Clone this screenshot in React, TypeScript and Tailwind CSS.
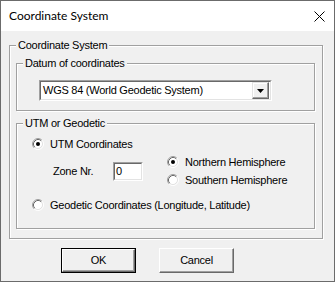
import type { ReactNode } from 'react';

const Radio = ({ checked }: { checked?: boolean }) => (
  <svg width="12" height="12" viewBox="0 0 12 12" className="shrink-0">
    <circle cx="6" cy="6" r="4.5" fill="#fff" />
    <path d="M2.11 9.89 A5.5 5.5 0 0 1 9.89 2.11" fill="none" stroke="#a0a0a0" />
    <path d="M2.11 9.89 A5.5 5.5 0 0 0 9.89 2.11" fill="none" stroke="#fff" />
    <path d="M2.82 9.18 A4.5 4.5 0 0 1 9.18 2.82" fill="none" stroke="#696969" />
    <path d="M2.82 9.18 A4.5 4.5 0 0 0 9.18 2.82" fill="none" stroke="#e3e3e3" />
    {checked && <circle cx="6" cy="6" r="2" fill="#000" />}
  </svg>
);

const Group = ({ label, className, children }: { label: string; className: string; children?: ReactNode }) => (
  <div className={`relative border border-[#a0a0a0] shadow-[inset_1px_1px_0_#fff,1px_1px_0_#fff] ${className}`}>
    <span className="absolute -top-[8px] left-[6px] bg-[#f0f0f0] px-[2px] leading-[14px]">{label}</span>
    {children}
  </div>
);

const Sunken = ({ className, children }: { className: string; children?: ReactNode }) => (
  <div className={`border border-t-[#a0a0a0] border-l-[#a0a0a0] border-r-white border-b-white ${className}`}>
    <div className="flex h-full items-center border border-t-[#696969] border-l-[#696969] border-r-[#e3e3e3] border-b-[#e3e3e3] bg-white">
      {children}
    </div>
  </div>
);

const Button = ({ label, primary }: { label: string; primary?: boolean }) => (
  <div className={`h-[25px] w-[75px] ${primary ? 'border border-black' : ''}`}>
    <div className="flex h-full items-center justify-center border border-t-white border-l-white border-r-[#696969] border-b-[#696969] shadow-[inset_-1px_-1px_0_#a0a0a0]">
      {label}
    </div>
  </div>
);

export default function App() {
  return (
    <div className="flex h-[282px] w-[335px] flex-col border border-[#6b6b6b] bg-[#f0f0f0] text-[11px] tracking-[-0.25px] text-black [font-family:'Liberation_Sans',Arial,sans-serif]">
      <div className="flex h-[30px] shrink-0 items-center justify-between bg-white pl-[8px] pr-[9px] text-[12px] tracking-normal [font-family:Lato,'Noto_Sans',sans-serif]">
        <span>Coordinate System</span>
        <svg width="11" height="11" viewBox="0 0 11 11">
          <path d="M0.5 0.5 L10.5 10.5 M10.5 0.5 L0.5 10.5" stroke="#000" strokeWidth="1" />
        </svg>
      </div>

      <Group label="Coordinate System" className="ml-[8px] mt-[14px] h-[194px] w-[314px] pl-[6px] pt-[17px]">
        <Group label="Datum of coordinates" className="h-[48px] w-[299px] pl-[22px] pt-[16px]">
          <Sunken className="h-[21px] w-[233px]">
            <span className="flex-1 pl-[2px]">WGS 84 (World Geodetic System)</span>
            <div className="mr-px flex h-[17px] w-[17px] items-center justify-center border border-t-[#e3e3e3] border-l-[#e3e3e3] border-r-[#696969] border-b-[#696969] bg-[#f0f0f0] shadow-[inset_-1px_-1px_0_#a0a0a0,inset_1px_1px_0_#fff]">
              <svg width="7" height="4" viewBox="0 0 7 4">
                <path d="M0 0 H7 L3.5 4 Z" fill="#000" />
              </svg>
            </div>
          </Sunken>
        </Group>

        <Group label="UTM or Geodetic" className="mt-[12px] flex h-[106px] w-[299px] flex-col pl-[15px] pt-[12px]">
          <div className="flex h-[16px] items-center gap-[6px]">
            <Radio checked />
            <span>UTM Coordinates</span>
          </div>
          <div className="mt-[2px] flex items-center">
            <span className="ml-[21px] w-[60px]">Zone Nr.</span>
            <Sunken className="h-[19px] w-[30px]">
              <span className="pl-[1px]">0</span>
            </Sunken>
            <div className="ml-[24px] flex flex-col gap-[2px]">
              <div className="flex h-[16px] items-center gap-[6px]">
                <Radio checked />
                <span>Northern Hemisphere</span>
              </div>
              <div className="flex h-[16px] items-center gap-[6px]">
                <Radio />
                <span>Southern Hemisphere</span>
              </div>
            </div>
          </div>
          <div className="mt-[9px] flex h-[16px] items-center gap-[6px]">
            <Radio />
            <span>Geodetic Coordinates (Longitude, Latitude)</span>
          </div>
        </Group>
      </Group>

      <div className="ml-[60px] mt-[9px] flex gap-[23px]">
        <Button label="OK" primary />
        <Button label="Cancel" />
      </div>
    </div>
  );
}
